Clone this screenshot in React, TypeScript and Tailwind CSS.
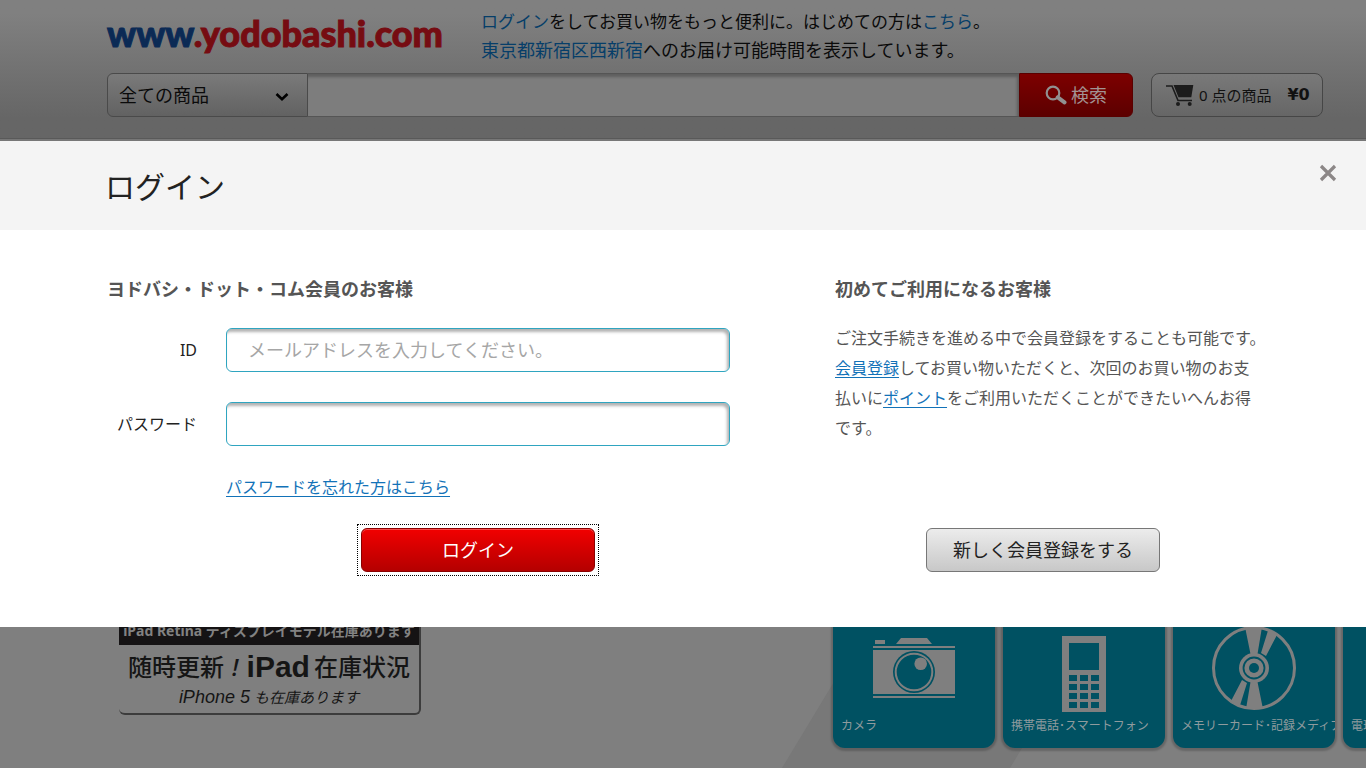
import type { ReactNode } from "react";

const field =
  "h-11 w-full min-w-0 rounded-md border border-[#2fa5c0] bg-white px-[21px] text-lg text-[#333] shadow-[inset_-2px_3px_3px_rgba(0,0,0,0.3)] outline-none placeholder:text-[#a6a6a6]";
const link = "text-[#1272b8] underline underline-offset-[3px]";

function CartIcon() {
  return (
    <svg className="h-[23px] w-7 shrink-0" viewBox="0 0 28 23" aria-hidden="true">
      <path d="M0 2h6l6 14.500h14" fill="none" stroke="#1c1c1c" strokeWidth="1.6" />
      <path d="M7.500 1H27.300L25.300 13.300H12.500Z" fill="#1c1c1c" />
      <circle cx="12" cy="20" r="2" fill="#1c1c1c" />
      <circle cx="23.700" cy="20" r="2" fill="#1c1c1c" />
    </svg>
  );
}

function SearchIcon() {
  return (
    <svg className="h-5 w-[22px]" viewBox="0 0 22 20" aria-hidden="true">
      <circle cx="8" cy="8" r="6.300" fill="none" stroke="#919191" strokeWidth="2.200" />
      <path d="M12.800 12.300L19.500 17.300" stroke="#919191" strokeWidth="4" strokeLinecap="round" />
    </svg>
  );
}

function CameraIcon() {
  return (
    <svg className="h-[60px] w-[82px]" viewBox="0 0 82 60" fill="#7f7f7f" aria-hidden="true">
      <path d="M2 2h10v4H2zM28 0h26l5 6H23zM0 8h82v2H0zM0 12h82v44H0zM0 58h82v2H0z" />
      <circle cx="41" cy="34" r="21" fill="#005162" />
      <circle cx="41" cy="34" r="18.300" fill="none" stroke="#7f7f7f" strokeWidth="2" />
      <circle cx="47.700" cy="25.700" r="6.300" />
    </svg>
  );
}

function PhoneIcon() {
  return (
    <svg className="h-[76px] w-11" viewBox="0 0 44 76" aria-hidden="true">
      <path d="M0 0h44v76H0z" fill="#7f7f7f" />
      <path d="M7 7h30v27H7z" fill="#005162" />
      {[39, 48, 57, 66].map((y) =>
        [7, 18, 29].map((x) => <rect key={`${x}-${y}`} x={x} y={y} width="8" height="6" fill="#005162" />)
      )}
    </svg>
  );
}

function DiscIcon() {
  const wedges = "M-9 -41L8 -41L3.500 -14H-3.500ZM14.500 -39L23.500 -34L12 -12L7 -15Z";
  return (
    <svg className="h-[84px] w-[84px]" viewBox="-42 -42 84 84" fill="#7f7f7f" aria-hidden="true">
      <circle r="40.500" fill="none" stroke="#7f7f7f" strokeWidth="3" />
      <path d={wedges} />
      <path d={wedges} transform="rotate(180)" />
      <circle r="15" />
      <circle r="10.500" fill="none" stroke="#005162" strokeWidth="1.800" />
      <circle r="5" fill="#005162" />
    </svg>
  );
}

function Tile({ label, children }: { label: string; children?: ReactNode }) {
  return (
    <a
      href="#"
      className="flex h-[162px] w-[162px] shrink-0 flex-col overflow-hidden rounded-xl bg-[#005162] px-2 pb-3 text-xs leading-5 text-[#8f9b9e] shadow-[0_1px_2px_2px_rgba(0,0,0,0.2)]"
    >
      <span className="flex h-[130px] items-end justify-center">{children}</span>
      <span className="whitespace-nowrap">{label}</span>
    </a>
  );
}

export default function App() {
  return (
    <div className="flex min-h-screen flex-col overflow-hidden bg-[#7f7f7f] font-['Noto_Sans','Noto_Sans_CJK_JP',sans-serif] text-[#0a0a0a]">
      <header className="h-[141px] border-b-2 border-[#777] bg-linear-to-b from-[#808080] from-10% to-[#666] to-85% pr-[43px] pl-[107px] shadow-[inset_0_-1px_0_#595959]">
        <div className="flex h-[73px] gap-[33px]">
          <a
            href="#"
            className="w-[341px] shrink-0 pt-3 font-['Lato',sans-serif] text-4xl leading-[42px] font-black whitespace-nowrap text-[#760c12] [-webkit-text-stroke:1px_currentColor]"
          >
            <span className="text-[#0b2a55]">www</span>.yodobashi.com
          </a>
          <div className="pt-[7px] whitespace-nowrap">
            <p className="text-[17px] leading-[29px]">
              <a href="#" className="text-[#063e69]">ログイン</a>をしてお買い物をもっと便利に。はじめての方は
              <a href="#" className="text-[#063e69]">こちら</a>。
            </p>
            <p className="text-lg leading-[29px]">
              <a href="#" className="text-[#063e69]">東京都新宿区西新宿</a>へのお届け可能時間を表示しています。
            </p>
          </div>
        </div>
        <div className="flex gap-[18px]">
          <form className="flex h-11 min-w-0 flex-1" onSubmit={(e) => e.preventDefault()}>
            <div className="relative w-[201px] shrink-0">
              <select
                aria-label="商品カテゴリ"
                className="h-full w-full appearance-none rounded-l-md border border-[#4a4a4a] bg-linear-to-b from-[#7a7a7a] to-[#626262] pl-[11px] text-lg outline-none"
              >
                <option>全ての商品</option>
              </select>
              <svg className="pointer-events-none absolute top-[19px] right-[19px] h-2.5 w-3.5" viewBox="0 0 14 10" aria-hidden="true">
                <path d="M1.500 2L7 7.300L12.500 2" fill="none" stroke="#000" strokeWidth="2.600" />
              </svg>
            </div>
            <input
              type="text"
              aria-label="検索キーワード"
              className="min-w-0 flex-1 border-y border-[#555] bg-[#7d7d7d] px-3 text-lg shadow-[inset_-2px_3px_3px_rgba(0,0,0,0.25)] outline-none"
            />
            <button
              type="submit"
              className="flex w-[114px] shrink-0 items-center justify-center gap-1 rounded-r-md border border-[#5a0000] bg-linear-to-b from-[#7d0000] to-[#5c0000] text-lg text-[#a39393]"
            >
              <SearchIcon />
              検索
            </button>
          </form>
          <a
            href="#"
            className="flex h-11 w-[172px] shrink-0 items-center rounded-lg border border-[#464646] bg-linear-to-b from-[#797979] to-[#666] pl-3.5 text-[15px] whitespace-nowrap text-[#111]"
          >
            <CartIcon />
            <span className="pl-[5px]">0 点の商品</span>
            <strong className="pl-4 font-['DejaVu_Sans',sans-serif] text-base">¥0</strong>
          </a>
        </div>
      </header>

      <section role="dialog" aria-labelledby="login-title" className="bg-white">
        <div className="flex h-[89px] items-start justify-between bg-[#f4f4f4] pr-7 pl-[105px]">
          <h1 id="login-title" className="pt-6 text-[30px] leading-[44px] text-[#222]">ログイン</h1>
          <button type="button" aria-label="閉じる" className="mt-[22px] flex h-5 w-5 items-center justify-center">
            <svg className="h-[18px] w-[18px]" viewBox="0 0 18 18" aria-hidden="true">
              <path d="M2 2L16 16M16 2L2 16" stroke="#8c8787" strokeWidth="3.200" />
            </svg>
          </button>
        </div>

        <div className="grid grid-cols-[minmax(0,623fr)_minmax(0,416fr)] gap-x-[105px] pt-11 pr-[115px] pb-[51px] pl-[107px]">
          <form className="flex flex-col" onSubmit={(e) => e.preventDefault()}>
            <h2 className="text-lg leading-[30px] font-bold text-[#555]">ヨドバシ・ドット・コム会員のお客様</h2>
            <div className="mt-6 grid grid-cols-[90px_1fr] items-center gap-x-[29px] gap-y-[30px]">
              <label htmlFor="login-id" className="text-right text-base text-[#222]">ID</label>
              <input id="login-id" type="text" placeholder="メールアドレスを入力してください。" className={field} />
              <label htmlFor="login-pw" className="text-right text-base whitespace-nowrap text-[#222]">パスワード</label>
              <input id="login-pw" type="password" className={field} />
            </div>
            <div className="mt-[26px] flex flex-col items-start pl-[119px]">
              <a href="#" className={`text-base leading-[30px] ${link}`}>パスワードを忘れた方はこちら</a>
              <div className="mt-[22px] self-center border border-dotted border-black p-[3px]">
                <button
                  type="submit"
                  className="block h-11 w-[234px] rounded-md border border-[#8a0000] bg-linear-to-b from-[#f20000] to-[#b40000] text-lg text-white shadow-[inset_0_1px_0_rgba(255,255,255,0.3)] outline-none"
                >
                  ログイン
                </button>
              </div>
            </div>
          </form>

          <div className="flex flex-col justify-between pb-1">
            <div>
              <h2 className="text-lg leading-[30px] font-bold text-[#555]">初めてご利用になるお客様</h2>
              <p className="mt-[19px] text-base leading-[30px] whitespace-nowrap text-[#555]">
                ご注文手続きを進める中で会員登録をすることも可能です。
                <br />
                <a href="#" className={link}>会員登録</a>してお買い物いただくと、次回のお買い物のお支
                <br />
                払いに<a href="#" className={link}>ポイント</a>をご利用いただくことができたいへんお得
                <br />
                です。
              </p>
            </div>
            <button
              type="button"
              className="h-11 w-[234px] self-center rounded-md border border-[#777] bg-linear-to-b from-[#ececec] to-[#c8c8c8] text-lg text-[#222]"
            >
              新しく会員登録をする
            </button>
          </div>
        </div>
      </section>

      <main className="relative flex h-[141px] justify-between overflow-hidden pl-[119px]">
        <svg className="absolute right-[250px] bottom-0 h-[141px] w-[334px]" viewBox="0 0 334 141" aria-hidden="true">
          <path d="M0 141L85 0H313L228 141Z" fill="#787878" />
        </svg>
        <a
          href="#"
          className="-mt-2.5 flex h-[98px] w-[302px] flex-col items-center rounded-br-md rounded-bl-md border-r-2 border-b-2 border-[#3c3c3c] whitespace-nowrap text-[#151515]"
        >
          <span className="h-7 w-full bg-[#151314] text-center text-sm leading-7 font-bold text-[#828282]">
            iPad Retina ディスプレイモデル在庫あります
          </span>
          <span className="flex items-center text-2xl leading-[44px] font-medium">
            随時更新
            <i className="px-2">!</i>
            <strong className="pr-1 font-['Liberation_Sans'] text-[30px]">iPad</strong>
            在庫状況
          </span>
          <span className="font-['Liberation_Sans','Noto_Sans_CJK_JP',sans-serif] text-[15px] leading-4 italic">
            <span className="text-lg leading-4">iPhone 5</span> も在庫あります
          </span>
        </a>
        <div className="relative -mt-[41px] flex w-[533px] shrink-0 gap-2">
          <Tile label="カメラ">
            <span className="pb-[18px]"><CameraIcon /></span>
          </Tile>
          <Tile label="携帯電話･スマートフォン">
            <span className="pb-1"><PhoneIcon /></span>
          </Tile>
          <Tile label="メモリーカード･記録メディア">
            <span className="pb-1.5"><DiscIcon /></span>
          </Tile>
          <Tile label="電球･照明" />
        </div>
      </main>
    </div>
  );
}
